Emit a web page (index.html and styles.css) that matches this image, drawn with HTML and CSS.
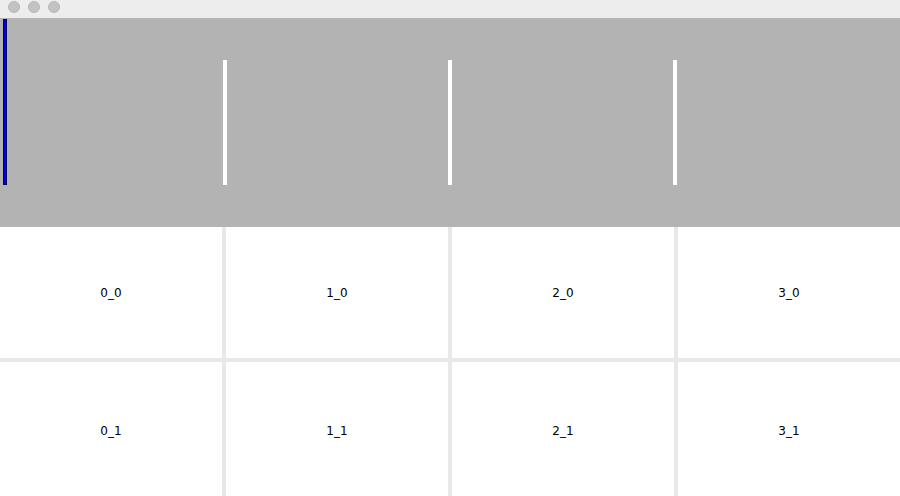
FILE: index.html
```html
<!DOCTYPE html>
<html>
<head>
<meta charset="utf-8">
<link rel="stylesheet" href="styles.css">
</head>
<body>
<div class="window">
  <div class="titlebar">
    <span class="dot"></span><span class="dot"></span><span class="dot"></span>
  </div>
  <div class="panel">
    <div class="bar blue"></div>
    <div class="bar white"></div>
    <div class="bar white"></div>
    <div class="bar white"></div>
  </div>
  <div class="grid">
    <div class="cell">0_0</div>
    <div class="cell">1_0</div>
    <div class="cell">2_0</div>
    <div class="cell">3_0</div>
    <div class="cell">0_1</div>
    <div class="cell">1_1</div>
    <div class="cell">2_1</div>
    <div class="cell">3_1</div>
  </div>
</div>
</body>
</html>
```
FILE: styles.css
```css
html, body {
  margin: 0;
  padding: 0;
  width: 900px;
  height: 496px;
  overflow: hidden;
  background: #ffffff;
  font-family: "DejaVu Sans", "Liberation Sans", sans-serif;
}
.window {
  display: flex;
  flex-direction: column;
  width: 900px;
  height: 496px;
}
.titlebar {
  height: 18px;
  background: #ededed;
  display: flex;
  align-items: center;
  gap: 8px;
  padding-left: 8px;
  box-sizing: border-box;
}
.dot {
  width: 12px;
  height: 12px;
  border-radius: 50%;
  background: #c3c3c3;
  border: 1px solid #b8b8b8;
  box-sizing: border-box;
  margin-top: -4px;
}
.panel {
  height: 209px;
  background: #b3b3b3;
  display: flex;
  align-items: flex-start;
}
.bar {
  flex: none;
}
.blue {
  width: 4px;
  height: 166px;
  margin-top: 1px;
  margin-left: 3px;
  background: #0000e6;
  border: 1px solid #00005a;
  box-sizing: border-box;
}
.white {
  width: 4px;
  height: 125px;
  margin-top: 42px;
  margin-left: 221px;
  background: #ffffff;
}
.blue + .white {
  margin-left: 216px;
}
.grid {
  flex: 1;
  display: grid;
  grid-template-columns: repeat(4, 1fr);
  grid-template-rows: 131px 1fr;
  gap: 4px;
  background: #e8e8e8;
}
.cell {
  background: #ffffff;
  display: flex;
  align-items: center;
  justify-content: center;
  font-size: 12px;
  color: #000000;
}
.cell:nth-child(n+5) {
  padding-top: 3px;
}
```
